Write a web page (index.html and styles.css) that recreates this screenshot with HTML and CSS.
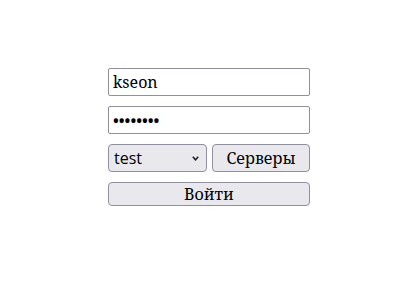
FILE: index.html
```html
<!DOCTYPE html>
<html lang="ru">
<head>
    <meta charset="UTF-8">
    <meta name="viewport" content="width=device-width, initial-scale=1.0">
    <title>Вход</title>
    <link rel="stylesheet" href="styles.css">
</head>
<body>
    <div class="login">
        <input class="field" type="text" value="kseon">
        <input class="field" type="password" value="12345678">
        <div class="row">
            <div class="select-wrap">
                <select class="server">
                    <option>test</option>
                </select>
                <svg class="chevron" width="7" height="5" viewBox="0 0 7 5"><path d="M0.8 0.8 L3.5 3.8 L6.2 0.8" fill="none" stroke="#1a1a1a" stroke-width="1.5"/></svg>
            </div>
            <button class="btn servers">Серверы</button>
        </div>
        <button class="btn enter">Войти</button>
    </div>
</body>
</html>
```

FILE: styles.css
```css
body{
    margin: 0;
    height: 299px;
    display: flex;
    align-items: flex-start;
}
.login{
    margin: 68px 0 0 108px;
    width: 202px;
    display: flex;
    flex-direction: column;
    gap: 10px;
}
.field{
    box-sizing: border-box;
    height: 28px;
    width: 100%;
    font-family: "Noto Serif", "Liberation Serif", serif;
    font-size: 16px;
    color: #000;
    padding: 0 4px;
    border: 1px solid #8f8f9d;
    border-radius: 2px;
    background: #fff;
}
.row{
    display: flex;
    gap: 5px;
}
.select-wrap{
    position: relative;
    width: 99px;
    height: 28px;
}
.server{
    appearance: none;
    box-sizing: border-box;
    width: 100%;
    height: 100%;
    padding: 0 5px;
    font-family: "Open Sans", "Noto Sans", sans-serif;
    font-size: 16px;
    color: #000;
    border: 1px solid #8f8f9d;
    border-radius: 4px;
    background-color: #e9e9ed;
}
.chevron{
    position: absolute;
    right: 8px;
    top: 12px;
    pointer-events: none;
}
.btn{
    box-sizing: border-box;
    font-family: "Noto Serif", "Liberation Serif", serif;
    font-size: 16px;
    color: #000;
    border: 1px solid #8f8f9d;
    border-radius: 4px;
    background-color: #e9e9ed;
    padding: 0;
}
.servers{
    width: 98px;
    height: 28px;
}
.enter{
    height: 24px;
    width: 100%;
}
```
